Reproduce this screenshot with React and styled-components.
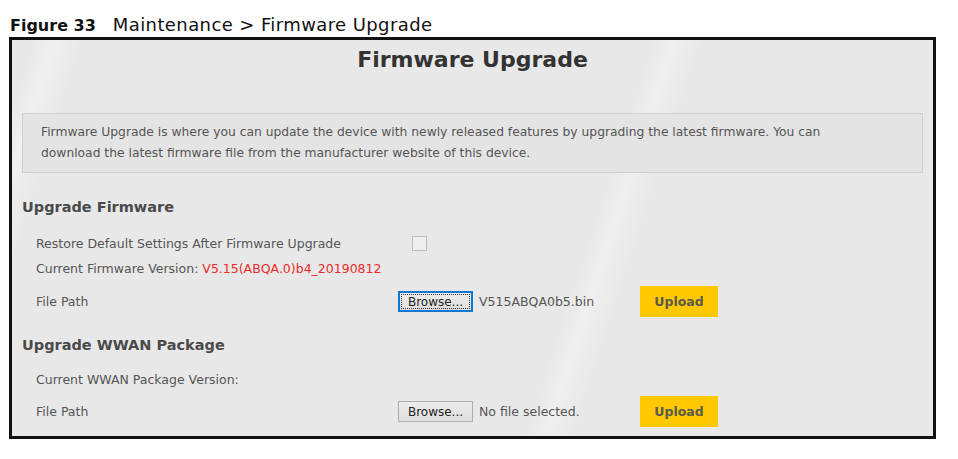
import React from "react";
import styled, { createGlobalStyle } from "styled-components";

const GlobalStyle = createGlobalStyle`
  body {
    margin: 0;
    background: #fff;
    font-family: "DejaVu Sans", "Liberation Sans", sans-serif;
  }
`;

const Page = styled.div`
  padding: 14px 0 0 9px;
  width: 927px;
`;

const Caption = styled.div`
  display: flex;
  align-items: baseline;
  gap: 17px;
  padding-left: 1px;
  height: 23px;
  font-size: 18px;
  color: #111;
`;

const CaptionNum = styled.span`
  font-size: 16px;
  font-weight: bold;
`;

const CaptionText = styled.span`
  letter-spacing: 0.4px;
`;

const Frame = styled.div`
  box-sizing: border-box;
  width: 927px;
  height: 402px;
  border: 3px solid #111;
  padding: 0 10px;
  background: linear-gradient(
      108deg,
      transparent 2%,
      rgba(255, 255, 255, 0.35) 4%,
      transparent 7%,
      transparent 61%,
      rgba(255, 255, 255, 0.3) 63%,
      transparent 66%
    ),
    #e8e8e8;
`;

const Title = styled.h1`
  margin: 0;
  padding-top: 6px;
  line-height: 28px;
  text-align: center;
  font-size: 22px;
  font-weight: bold;
  color: #333;
`;

const InfoBox = styled.div`
  box-sizing: border-box;
  margin-top: 39px;
  height: 60px;
  border: 1px solid #cfcfcf;
  background: #e4e4e4;
  padding: 8px 18px 0;
  font-size: 12.3px;
  line-height: 21px;
  color: #555;
`;

const Heading = styled.h2`
  margin: ${(p) => p.$top}px 0 0;
  line-height: 20px;
  font-size: 14.5px;
  font-weight: bold;
  color: #4a4a4a;
`;

const Row = styled.div`
  display: grid;
  grid-template-columns: 362px 1fr;
  align-items: center;
  margin-top: ${(p) => p.$top}px;
  padding-left: 14px;
  min-height: ${(p) => p.$h || 22}px;
  font-size: 12.5px;
  color: #555;
`;

const Value = styled.span`
  color: #ee2a2a;
`;

const Controls = styled.div`
  display: flex;
  align-items: center;
`;

const Checkbox = styled.span`
  box-sizing: border-box;
  width: 15px;
  height: 15px;
  margin-left: 14px;
  border: 1px solid #bdbdbd;
  background: #eeeeee;
`;

const FileBox = styled.div`
  display: flex;
  align-items: center;
  gap: 6px;
  width: 242px;
  font-size: 12.5px;
  color: #555;
`;

const Browse = styled.button`
  box-sizing: border-box;
  width: 75px;
  height: 21px;
  padding: 0;
  font-family: inherit;
  font-size: 12px;
  color: #222;
  background: linear-gradient(#ececec, #dedede);
  border: ${(p) => (p.$focus ? "2px solid #0a78d4" : "1px solid #adadad")};
  outline: ${(p) => (p.$focus ? "1px dotted #333" : "none")};
  outline-offset: -4px;
`;

const Upload = styled.button`
  width: 78px;
  height: 31px;
  border: none;
  background: #ffc800;
  font-family: inherit;
  font-size: 12.5px;
  font-weight: bold;
  color: #5a5a4a;
`;

const App = () => (
  <>
    <GlobalStyle />
    <Page>
      <Caption>
        <CaptionNum>Figure 33</CaptionNum>
        <CaptionText>Maintenance &gt; Firmware Upgrade</CaptionText>
      </Caption>
      <Frame>
        <Title>Firmware Upgrade</Title>
        <InfoBox>
          Firmware Upgrade is where you can update the device with newly released features by upgrading the latest
          firmware. You can
          <br />
          download the latest firmware file from the manufacturer website of this device.
        </InfoBox>

        {/* Upgrade Firmware */}
        <Heading $top={24}>Upgrade Firmware</Heading>
        <Row $top={15}>
          <span>Restore Default Settings After Firmware Upgrade</span>
          <Controls>
            <Checkbox />
          </Controls>
        </Row>
        <Row $top={3}>
          <span>
            Current Firmware Version: <Value>V5.15(ABQA.0)b4_20190812</Value>
          </span>
        </Row>
        <Row $top={7} $h={31}>
          <span>File Path</span>
          <Controls>
            <FileBox>
              <Browse $focus>Browse...</Browse>
              <span>V515ABQA0b5.bin</span>
            </FileBox>
            <Upload>Upload</Upload>
          </Controls>
        </Row>

        {/* Upgrade WWAN Package */}
        <Heading $top={18}>Upgrade WWAN Package</Heading>
        <Row $top={13}>
          <span>Current WWAN Package Version:</span>
        </Row>
        <Row $top={6} $h={31}>
          <span>File Path</span>
          <Controls>
            <FileBox>
              <Browse>Browse...</Browse>
              <span>No file selected.</span>
            </FileBox>
            <Upload>Upload</Upload>
          </Controls>
        </Row>
      </Frame>
    </Page>
  </>
);

export default App;
